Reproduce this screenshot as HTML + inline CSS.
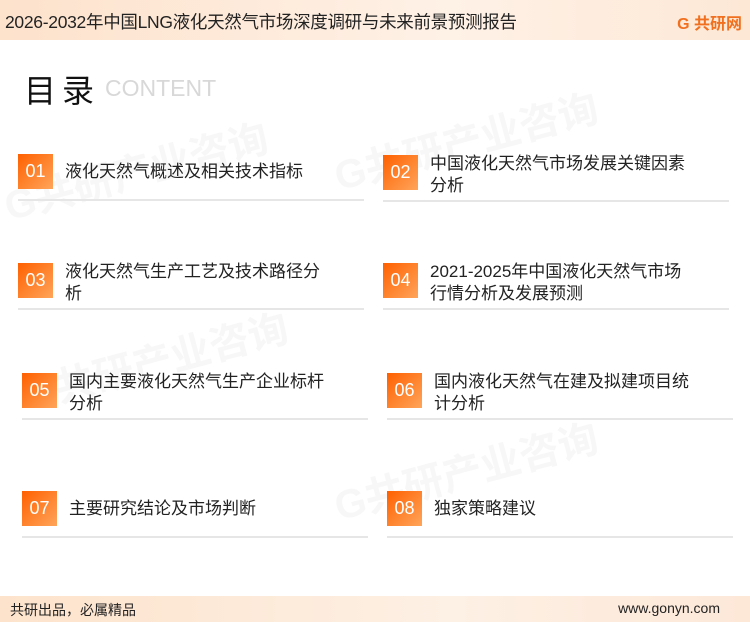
<!DOCTYPE html>
<html><head><meta charset="utf-8"><style>
body{margin:0;width:750px;height:622px;position:relative;background:#fff;font-family:"Liberation Sans","Noto Sans CJK SC",sans-serif;overflow:hidden}
.hd{position:absolute;left:0;top:0;width:750px;height:40px;background:linear-gradient(90deg,#fde2cc,#fef1e6 60%,#fde8d6);}
.hd .t{position:absolute;left:5px;top:9px;font-size:17.5px;color:#222;letter-spacing:-0.3px}
.logo{position:absolute;right:8px;top:10px;font-size:16px;font-weight:bold;color:#f07020}
.ft{position:absolute;left:0;top:596px;width:750px;height:26px;background:linear-gradient(90deg,#fde3cc,#fdf0e4 60%,#fde8d8)}
.ft span{position:absolute;top:4px;font-size:14px;color:#222}
.ml{position:absolute;left:24px;top:66px;font-size:32px;color:#111;letter-spacing:6px}
.ct{position:absolute;left:105px;top:75px;font-size:23px;color:#d8d8d8}
.it{position:absolute;width:346px}
.it .b{position:absolute;left:0;top:0;width:35px;height:35px;background:linear-gradient(135deg,#ff6000,#ffa55a);color:#fff;font-size:18px;text-align:center;line-height:35px}
.it .x{position:absolute;left:47px;font-size:17px;color:#222;line-height:22px;width:262px}
.it .l{position:absolute;left:0;width:346px;height:2px;background:#e6e6e6}
.wm{position:absolute;font-size:40px;font-weight:bold;color:#f7f7f7;transform:rotate(-15deg);white-space:nowrap}
</style></head><body>
<div class="wm" style="left:0;top:140px">G共研产业咨询</div>
<div class="wm" style="left:330px;top:110px">G共研产业咨询</div>
<div class="wm" style="left:20px;top:330px">G共研产业咨询</div>
<div class="wm" style="left:330px;top:440px">G共研产业咨询</div>
<div class="hd"><div class="t">2026-2032年中国LNG液化天然气市场深度调研与未来前景预测报告</div><div class="logo">G 共研网</div></div>
<div class="ml">目录</div><div class="ct">CONTENT</div>
<div class="it" style="left:18px;top:154px"><div class="b">01</div><div class="x" style="top:7px">液化天然气概述及相关技术指标</div><div class="l" style="top:45px"></div></div>
<div class="it" style="left:383px;top:155px"><div class="b">02</div><div class="x" style="top:-2px">中国液化天然气市场发展关键因素分析</div><div class="l" style="top:45px"></div></div>
<div class="it" style="left:18px;top:263px"><div class="b">03</div><div class="x" style="top:-2px">液化天然气生产工艺及技术路径分析</div><div class="l" style="top:45px"></div></div>
<div class="it" style="left:383px;top:263px"><div class="b">04</div><div class="x" style="top:-2px">2021-2025年中国液化天然气市场<br>行情分析及发展预测</div><div class="l" style="top:45px"></div></div>
<div class="it" style="left:22px;top:373px"><div class="b">05</div><div class="x" style="top:-2px">国内主要液化天然气生产企业标杆分析</div><div class="l" style="top:45px"></div></div>
<div class="it" style="left:387px;top:373px"><div class="b">06</div><div class="x" style="top:-2px">国内液化天然气在建及拟建项目统计分析</div><div class="l" style="top:45px"></div></div>
<div class="it" style="left:22px;top:491px"><div class="b">07</div><div class="x" style="top:7px">主要研究结论及市场判断</div><div class="l" style="top:45px"></div></div>
<div class="it" style="left:387px;top:491px"><div class="b">08</div><div class="x" style="top:7px">独家策略建议</div><div class="l" style="top:45px"></div></div>
<div class="ft"><span style="left:10px">共研出品，必属精品</span><span style="right:30px">www.gonyn.com</span></div>
</body></html>
